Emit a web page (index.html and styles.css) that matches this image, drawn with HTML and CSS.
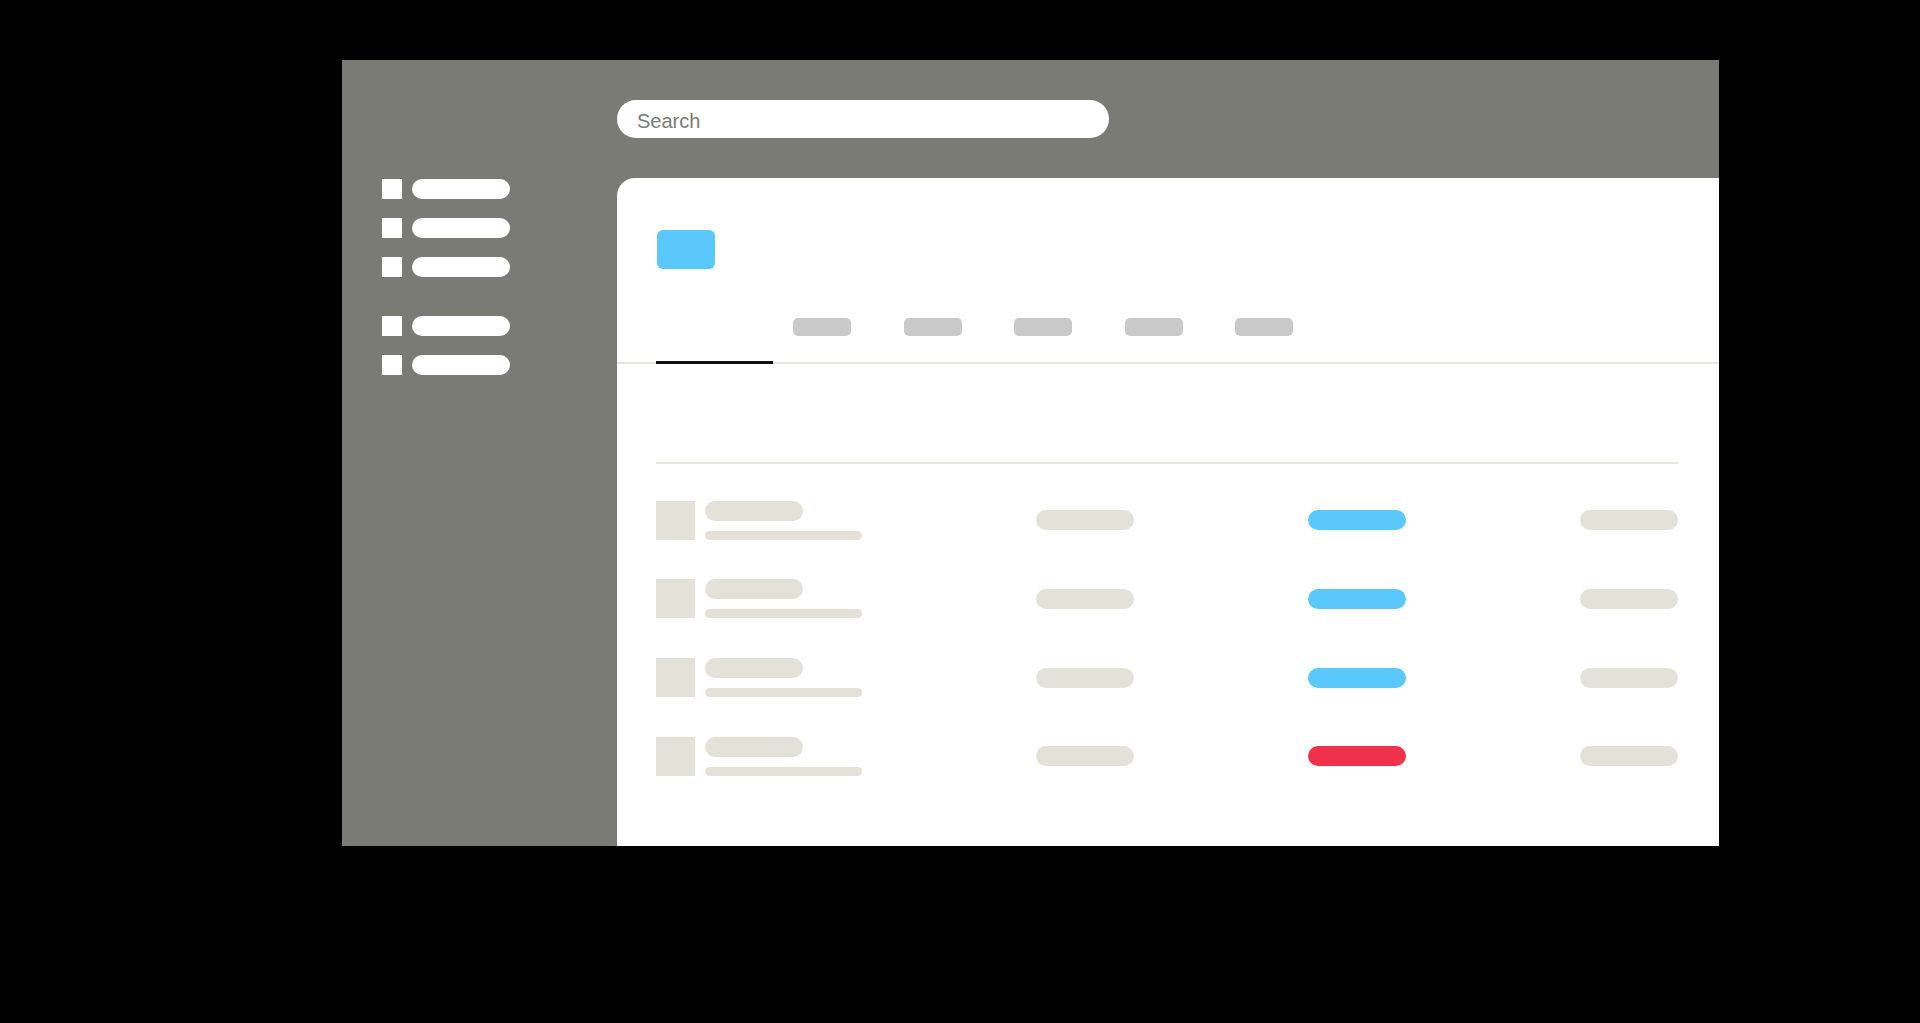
FILE: index.html
```html
<!DOCTYPE html>
<html lang="en">
<head>
<meta charset="utf-8">
<title>Dashboard</title>
<link rel="stylesheet" href="styles.css">
</head>
<body>
<div class="frame">
  <aside class="sidebar">
    <div class="nav-group">
      <div class="nav-item"><span class="nav-icon"></span><span class="nav-label"></span></div>
      <div class="nav-item"><span class="nav-icon"></span><span class="nav-label"></span></div>
      <div class="nav-item"><span class="nav-icon"></span><span class="nav-label"></span></div>
    </div>
    <div class="nav-group">
      <div class="nav-item"><span class="nav-icon"></span><span class="nav-label"></span></div>
      <div class="nav-item"><span class="nav-icon"></span><span class="nav-label"></span></div>
    </div>
  </aside>
  <main class="main">
    <div class="search">Search</div>
    <section class="card">
      <div class="card-head">
        <div class="primary-btn"></div>
      </div>
      <div class="tabs">
        <span class="tab-active"></span>
        <span class="tab first"></span>
        <span class="tab"></span>
        <span class="tab"></span>
        <span class="tab"></span>
        <span class="tab"></span>
      </div>
      <div class="table">
        <div class="divider"></div>
        <div class="rows">
          <div class="row">
            <div class="cell-main"><span class="thumb"></span><span class="lines"><span class="title"></span><span class="sub"></span></span></div>
            <span class="pill"></span><span class="pill blue"></span><span class="pill"></span>
          </div>
          <div class="row">
            <div class="cell-main"><span class="thumb"></span><span class="lines"><span class="title"></span><span class="sub"></span></span></div>
            <span class="pill"></span><span class="pill blue"></span><span class="pill"></span>
          </div>
          <div class="row">
            <div class="cell-main"><span class="thumb"></span><span class="lines"><span class="title"></span><span class="sub"></span></span></div>
            <span class="pill"></span><span class="pill blue"></span><span class="pill"></span>
          </div>
          <div class="row">
            <div class="cell-main"><span class="thumb"></span><span class="lines"><span class="title"></span><span class="sub"></span></span></div>
            <span class="pill"></span><span class="pill red"></span><span class="pill"></span>
          </div>
        </div>
      </div>
    </section>
  </main>
</div>
</body>
</html>
```
FILE: styles.css
```css
html, body {
  margin: 0;
  padding: 0;
  background: #000;
  height: 100%;
}
body {
  font-family: "Liberation Sans", Arial, sans-serif;
}
.frame {
  margin: 60px 0 0 342px;
  width: 1377px;
  height: 786px;
  background: #7b7b75;
  display: grid;
  grid-template-columns: 275px 1fr;
}
.sidebar {
  padding: 119px 0 0 40px;
  display: flex;
  flex-direction: column;
  gap: 39px;
}
.nav-group {
  display: flex;
  flex-direction: column;
  gap: 19px;
}
.nav-item {
  display: flex;
  align-items: center;
  gap: 10px;
  height: 20px;
}
.nav-icon {
  width: 20px;
  height: 20px;
  background: #fff;
}
.nav-label {
  width: 98px;
  height: 20px;
  border-radius: 10px;
  background: #fff;
}
.main {
  display: flex;
  flex-direction: column;
  padding-top: 40px;
  min-width: 0;
}
.search {
  width: 492px;
  height: 38px;
  box-sizing: border-box;
  border-radius: 19px;
  background: #fff;
  color: #7a7a7a;
  font-family: "Liberation Sans", Arial, sans-serif;
  font-size: 20px;
  line-height: 38px;
  padding: 2px 0 0 20px;
}
.card {
  margin-top: 40px;
  flex: 1;
  background: #fff;
  border-top-left-radius: 18px;
  padding-top: 52px;
  box-sizing: border-box;
}
.card-head {
  padding-left: 40px;
  height: 39px;
}
.primary-btn {
  width: 58px;
  height: 39px;
  border-radius: 6px;
  background: #5ac8fa;
}
.tabs {
  margin-top: 23px;
  height: 70px;
  border-bottom: 2px solid #e6e5dd;
  display: flex;
  align-items: center;
  padding-left: 39px;
}
.tab-active {
  align-self: flex-end;
  width: 117px;
  height: 3px;
  margin-bottom: -2px;
  background: #111;
}
.tab {
  width: 58px;
  height: 18px;
  border-radius: 5px;
  background: #c9c9c9;
  margin-left: 52.5px;
}
.tab.first {
  margin-left: 20px;
}
.table {
  padding: 0 41px 0 39px;
}
.divider {
  margin-top: 98px;
  height: 2px;
  background: #e6e5dd;
}
.rows {
  margin-top: 36.5px;
  display: flex;
  flex-direction: column;
  gap: 39.8px;
}
.row {
  display: flex;
  align-items: center;
  justify-content: space-between;
  height: 39px;
}
.cell-main {
  display: flex;
  gap: 10px;
  height: 39px;
}
.thumb {
  width: 39px;
  height: 39px;
  background: #e3e1d8;
}
.lines {
  display: flex;
  flex-direction: column;
  justify-content: space-between;
}
.title {
  width: 98px;
  height: 20px;
  border-radius: 10px;
  background: #e3e1d8;
}
.sub {
  width: 157px;
  height: 9px;
  border-radius: 5px;
  background: #e3e1d8;
}
.pill {
  width: 98px;
  height: 20px;
  border-radius: 10px;
  background: #e3e1d8;
}
.pill.blue {
  background: #5ac8fa;
}
.pill.red {
  background: #f0314b;
}
```
